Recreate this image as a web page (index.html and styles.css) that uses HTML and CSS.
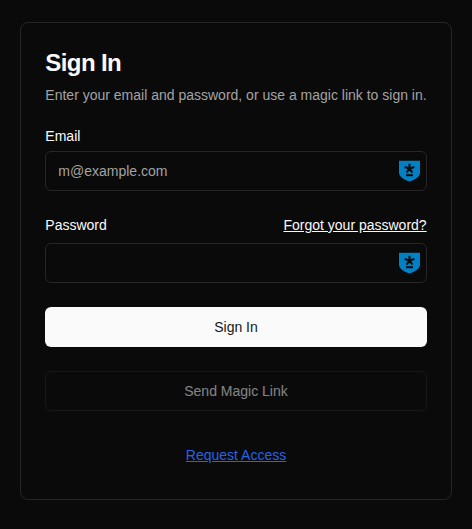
FILE: index.html
```html
<!DOCTYPE html>
<html lang="en">
<head>
<meta charset="utf-8">
<title>Sign In</title>
<link rel="stylesheet" href="styles.css">
</head>
<body>
<svg class="sprite" aria-hidden="true">
  <symbol id="shield" viewBox="0 0 21 21">
    <path fill="#0081c6" d="M0 .7H21V12.500C21 17 16 19.700 10.500 21.400C5 19.700 0 17 0 12.500Z"/>
    <path fill="none" stroke="#0a0a0a" stroke-width="2.100" d="M10.500 8.500V3.800M10.500 8.500L5.600 7M10.500 8.500L15.400 7M10.500 8.500L7.600 12.700M10.500 8.500L13.400 12.700"/>
    <path fill="#0a0a0a" d="M7 14.200H14V16.200H7Z"/>
  </symbol>
</svg>
<main class="card">
  <header class="card-header">
    <h1 class="title">Sign In</h1>
    <p class="description">Enter your email and password, or use a magic link to sign in.</p>
  </header>
  <form class="form">
    <div class="field">
      <label class="label" for="email">Email</label>
      <div class="control">
        <input class="input" id="email" type="email" placeholder="m@example.com">
        <svg class="shield"><use href="#shield"/></svg>
      </div>
    </div>
    <div class="field">
      <div class="label-row">
        <label class="label" for="password">Password</label>
        <a class="forgot" href="#">Forgot your password?</a>
      </div>
      <div class="control">
        <input class="input" id="password" type="password">
        <svg class="shield"><use href="#shield"/></svg>
      </div>
    </div>
    <button class="button primary" type="submit">Sign In</button>
    <button class="button outline" type="button" disabled>Send Magic Link</button>
    <a class="request" href="#">Request Access</a>
  </form>
</main>
</body>
</html>
```
FILE: styles.css
```css
* {
  box-sizing: border-box;
}

body {
  display: flex;
  justify-content: center;
  margin: 0;
  padding: 22px 20px;
  background: #0a0a0a;
  color: #fafafa;
  font: 14px/20px "Liberation Sans", Arial, sans-serif;
}

.sprite {
  position: absolute;
  width: 0;
  height: 0;
}

.sprite symbol {
  overflow: visible;
}

.card {
  padding: 24px;
  border: 1px solid #262626;
  border-radius: 8px;
}

.card-header {
  display: flex;
  flex-direction: column;
  gap: 6px;
  margin-bottom: 24px;
}

.title {
  margin: 0;
  font-size: 24px;
  line-height: 32px;
  font-weight: 600;
  letter-spacing: -0.6px;
}

.description {
  margin: 0;
  color: #a3a3a3;
  white-space: nowrap;
}

.form {
  display: flex;
  flex-direction: column;
  gap: 24px;
}

.field {
  display: flex;
  flex-direction: column;
  gap: 8px;
}

.label {
  line-height: 14px;
}

.label-row {
  display: flex;
  align-items: center;
  justify-content: space-between;
}

.forgot {
  color: inherit;
}

.control {
  position: relative;
  height: 40px;
}

.input {
  display: block;
  width: 100%;
  height: 40px;
  padding: 8px 12px;
  border: 1px solid #262626;
  border-radius: 6px;
  outline: none;
  background: #0a0a0a;
  color: #fafafa;
  font: inherit;
}

.input::placeholder {
  color: #a3a3a3;
}

.shield {
  position: absolute;
  top: 9px;
  right: 7px;
  width: 21px;
  height: 21px;
  overflow: visible;
}

.button {
  height: 40px;
  border: 1px solid transparent;
  border-radius: 6px;
  font: inherit;
}

.primary {
  background: #fafafa;
  color: #171717;
}

.outline {
  border-color: #262626;
  background: #0a0a0a;
  color: #fafafa;
  opacity: 0.5;
}

.request {
  align-self: center;
  line-height: 40px;
  color: #2563eb;
}
```
